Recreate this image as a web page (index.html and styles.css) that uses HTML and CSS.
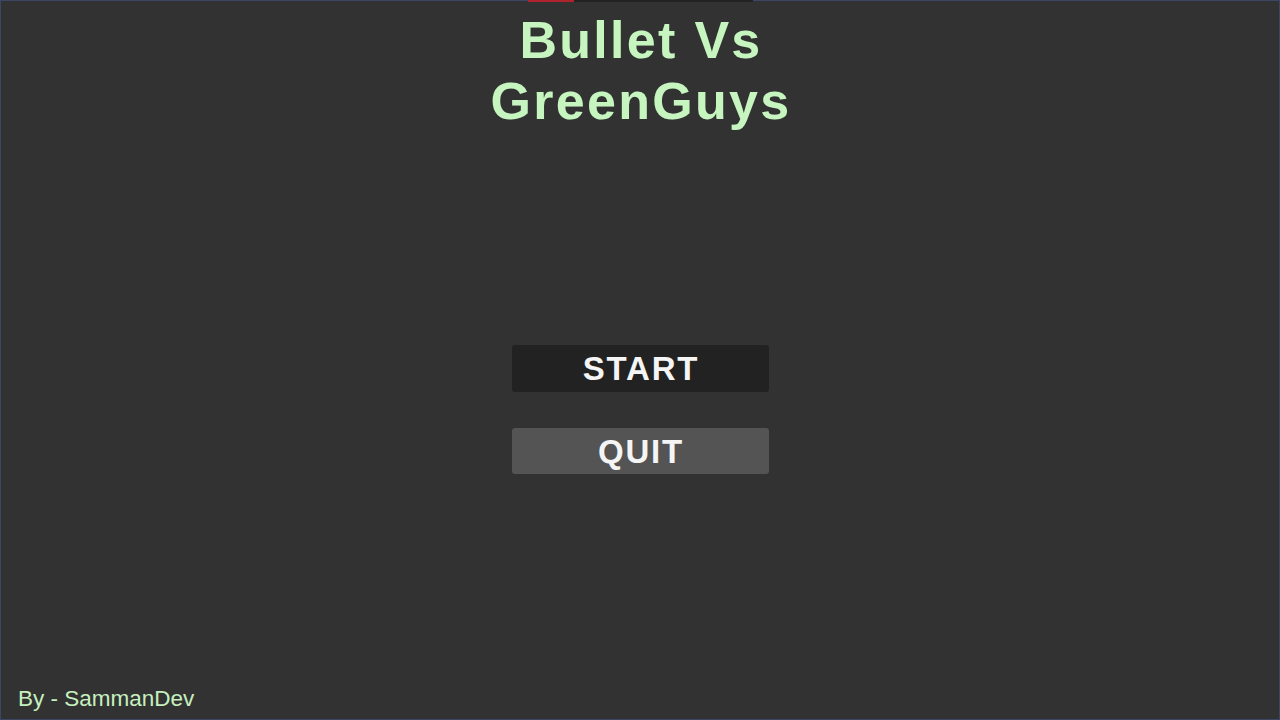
FILE: index.html
```html
<!DOCTYPE html>
<html lang="en">
<head>
<meta charset="utf-8">
<title>Bullet Vs GreenGuys</title>
<link rel="stylesheet" href="styles.css">
</head>
<body>
<div class="screen">
  <div class="topbar"><span class="seg-red"></span><span class="seg-dark"></span></div>
  <h1 class="title">Bullet Vs<br>GreenGuys</h1>
  <div class="menu">
    <button class="btn btn-start">START</button>
    <button class="btn btn-quit">QUIT</button>
  </div>
  <div class="footer">By - SammanDev</div>
</div>
</body>
</html>
```

FILE: styles.css
```css
html, body {
  margin: 0;
  padding: 0;
  background: #323232;
}
.screen {
  position: relative;
  box-sizing: border-box;
  width: 1280px;
  height: 720px;
  border: 1px solid #3c4664;
  background: #323232;
  display: flex;
  flex-direction: column;
  align-items: center;
  font-family: "Liberation Sans", Arial, sans-serif;
}
.topbar {
  position: absolute;
  top: -1px;
  left: 527px;
  height: 2px;
  display: flex;
}
.seg-red {
  width: 46px;
  height: 2px;
  background: #b0222c;
}
.seg-dark {
  width: 179px;
  height: 2px;
  background: #232323;
}
.title {
  margin: 9px 0 0 0;
  font-size: 52px;
  line-height: 61px;
  font-weight: bold;
  letter-spacing: 2.3px;
  color: #c6f5bf;
  text-align: center;
  padding-left: 2px;
}
.menu {
  margin-top: 213px;
  display: flex;
  flex-direction: column;
  gap: 36px;
}
.btn {
  width: 257px;
  height: 47px;
  border: none;
  border-radius: 3px;
  color: #f5f5f5;
  font-family: "Liberation Sans", Arial, sans-serif;
  font-weight: bold;
  font-size: 33px;
  letter-spacing: 1.8px;
  padding: 0 0 0 2px;
  line-height: 47px;
}
.btn-start {
  background: #222222;
}
.btn-quit {
  background: #545454;
  height: 46px;
}
.footer {
  margin-top: auto;
  align-self: flex-start;
  margin-left: 17px;
  margin-bottom: 7px;
  font-size: 22.5px;
  line-height: 26px;
  color: #c6f0bf;
}
```
